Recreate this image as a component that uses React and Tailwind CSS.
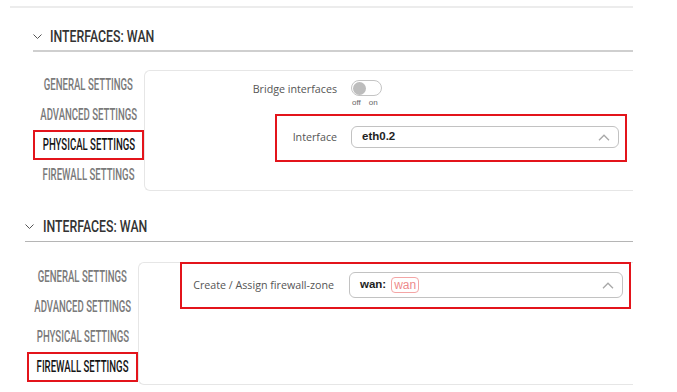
import React from "react";

const ChevronDown = () => (
  <svg width="9" height="5" viewBox="0 0 9 5" className="shrink-0">
    <path d="M0.5 0.5 L4.5 4.5 L8.5 0.5" fill="none" stroke="#555" strokeWidth="1" />
  </svg>
);

const ChevronUp = () => (
  <svg width="12" height="7" viewBox="0 0 12 7" className="shrink-0">
    <path d="M1 6.2 L6 1.2 L11 6.2" fill="none" stroke="#a8a8a8" strokeWidth="1.3" />
  </svg>
);

const ITEMS = ["GENERAL SETTINGS", "ADVANCED SETTINGS", "PHYSICAL SETTINGS", "FIREWALL SETTINGS"];

function Nav({ active }) {
  return (
    <div className="flex w-[111px] shrink-0 flex-col">
      {ITEMS.map((it) => (
        <div
          key={it}
          className={
            it === active
              ? "flex h-[30px] items-center justify-center border-2 border-[#e3141b] text-[#151515]"
              : "flex h-[30px] items-center justify-center text-[#7a7a7a]"
          }
        >
          <span className="inline-block scale-x-[0.6] whitespace-nowrap font-['Roboto'] text-[16px] font-medium leading-none">
            {it}
          </span>
        </div>
      ))}
    </div>
  );
}

function Title() {
  return (
    <span className="inline-block origin-left scale-x-[0.77] whitespace-nowrap font-['Roboto'] text-[16px] font-medium leading-none text-[#333]">
      INTERFACES: WAN
    </span>
  );
}

export default function App() {
  return (
    <div className="h-[392px] w-[677px] overflow-hidden bg-white font-['Open_Sans']">
      <div className="ml-[10px] mt-[6px] h-[2px] w-[623px] bg-[#ececec]" />

      {/* Section 1 */}
      <div className="ml-[33px] w-[600px]">
        <div className="mt-[15px] flex h-[29px] items-center gap-[8px] border-b-2 border-[#cfcfcf]">
          <ChevronDown />
          <Title />
        </div>
        <div className="mt-[18px] flex">
          <Nav active="PHYSICAL SETTINGS" />
          <div className="relative h-[121px] w-[489px] rounded-l-[6px] border-y border-l border-[#e6e6e6] pt-[9px]">
            <div className="flex items-start">
              <div className="w-[192px] pt-[1px] text-right text-[10.7px] leading-[16px] text-[#555]">Bridge interfaces</div>
              <div className="ml-[14px] flex flex-col">
                <div className="flex h-[16px] w-[31px] items-center rounded-full border border-[#c4c4c4] bg-white">
                  <div className="ml-[1px] h-[13px] w-[13px] rounded-full bg-[#bdbdbd]" />
                </div>
                <div className="mt-[3px] flex gap-[8px] pl-[1px] font-['Liberation_Sans'] text-[8px] leading-[8px] text-[#666]">
                  <span>off</span>
                  <span>on</span>
                </div>
              </div>
            </div>
            <div className="mt-[19px] flex items-center">
              <div className="w-[192px] text-right text-[10.7px] leading-[16px] text-[#555]">Interface</div>
              <div className="ml-[14px] flex h-[22px] w-[268px] items-center justify-between rounded-[6px] border border-[#c2c2c2] pl-[10px] pr-[8px]">
                <span className="font-['Liberation_Sans'] text-[11.5px] font-semibold text-[#222]">eth0.2</span>
                <ChevronUp />
              </div>
            </div>
            <div className="pointer-events-none absolute left-[130px] top-[43px] h-[48px] w-[352px] border-2 border-[#e3141b]" />
          </div>
        </div>
      </div>

      {/* Section 2 */}
      <div className="ml-[25px] mt-[21px] flex h-[30px] w-[608px] items-center gap-[9px] border-b border-[#b5b5b5]">
        <ChevronDown />
        <Title />
      </div>
      <div className="ml-[27px] mt-[20px] flex">
        <Nav active="FIREWALL SETTINGS" />
        <div className="relative h-[123px] w-[495px] rounded-l-[6px] border-y border-l border-[#e6e6e6] pt-[9px]">
          <div className="flex items-center">
            <div className="w-[195px] text-right text-[10.7px] leading-[16px] text-[#555]">Create / Assign firewall-zone</div>
            <div className="ml-[15px] flex h-[26px] w-[274px] items-center justify-between rounded-[6px] border border-[#c2c2c2] pl-[10px] pr-[8px]">
              <div className="flex items-center font-['Liberation_Sans'] text-[11.5px]">
                <span className="font-bold text-[#1e1e1e]">wan:</span>
                <span className="ml-[5px] rounded-[4px] border border-[#f4a5a5] px-[2px] text-[12px] leading-[14px] text-[#ee8a8a]">wan</span>
              </div>
              <ChevronUp />
            </div>
          </div>
          <div className="pointer-events-none absolute left-[41px] top-[-1px] h-[47px] w-[451px] border-2 border-[#e3141b]" />
        </div>
      </div>
    </div>
  );
}
